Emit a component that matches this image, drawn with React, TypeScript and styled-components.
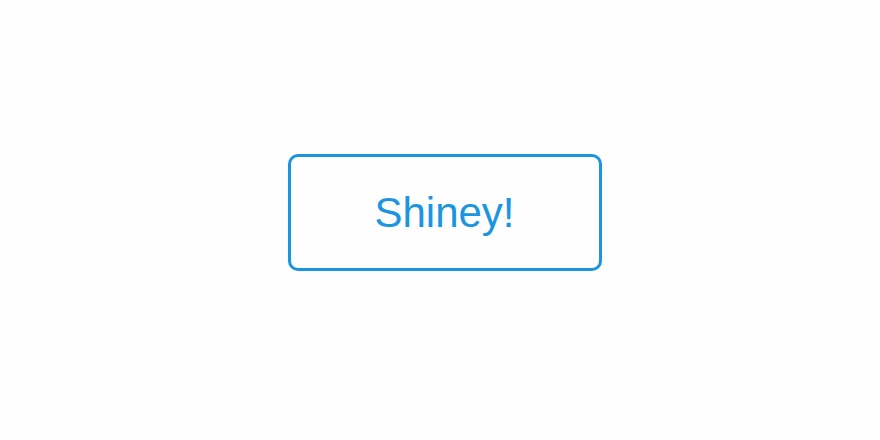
import React from "react";
import styled, { createGlobalStyle } from "styled-components";

const GlobalStyle = createGlobalStyle`
  html, body {
    margin: 0;
    padding: 0;
    background: #fefefe;
    font-family: "Liberation Sans", Arial, sans-serif;
  }
`;

const Stage = styled.div`
  width: 880px;
  height: 440px;
  box-sizing: border-box;
  display: flex;
  justify-content: center;
  align-items: center;
  padding: 0 0 16px 9px;
`;

const ShineyButton = styled.button`
  width: 314px;
  height: 117px;
  box-sizing: border-box;
  background: transparent;
  color: #1b95e0;
  border: 3px solid #1b95e0;
  border-radius: 10px;
  font-family: "Liberation Sans", Arial, sans-serif;
  font-size: 42px;
  padding: 2px 0 0;
  cursor: pointer;
`;

const App: React.FC = () => (
  <>
    <GlobalStyle />
    <Stage>
      <ShineyButton>Shiney!</ShineyButton>
    </Stage>
  </>
);

export default App;
